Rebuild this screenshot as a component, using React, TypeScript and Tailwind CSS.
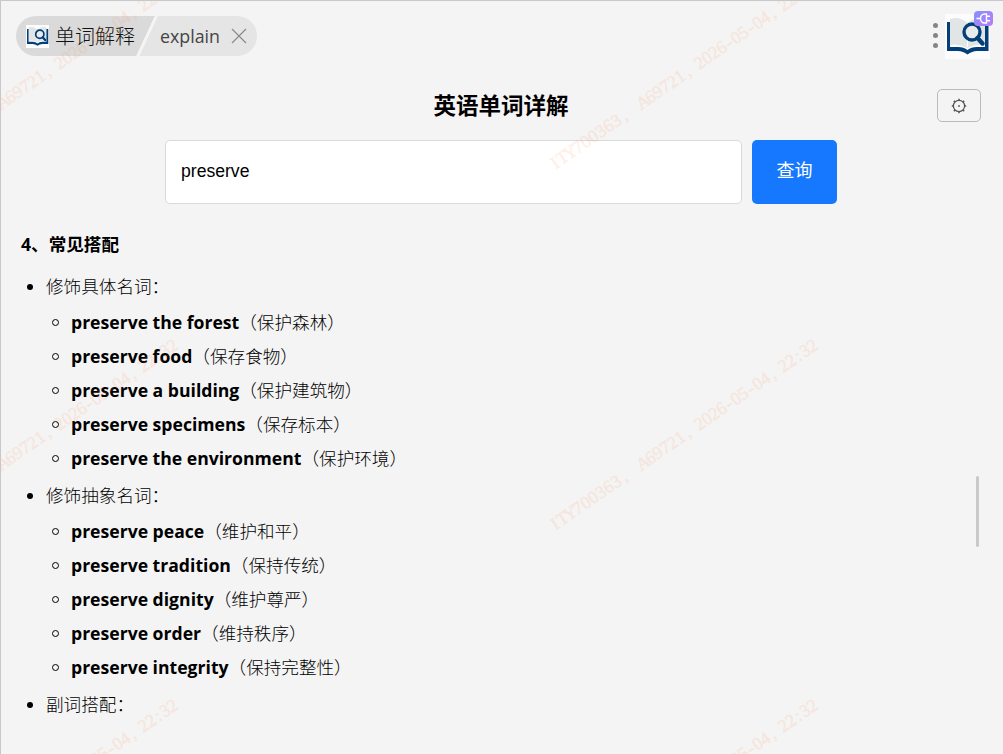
import { useState } from "react";

type TCollocation = {
  phrase: string;
  meaning: string;
};

type TGroup = {
  title: string;
  items: TCollocation[];
};

const groups: TGroup[] = [
  {
    title: "修饰具体名词：",
    items: [
      { phrase: "preserve the forest", meaning: "（保护森林）" },
      { phrase: "preserve food", meaning: "（保存食物）" },
      { phrase: "preserve a building", meaning: "（保护建筑物）" },
      { phrase: "preserve specimens", meaning: "（保存标本）" },
      { phrase: "preserve the environment", meaning: "（保护环境）" },
    ],
  },
  {
    title: "修饰抽象名词：",
    items: [
      { phrase: "preserve peace", meaning: "（维护和平）" },
      { phrase: "preserve tradition", meaning: "（保持传统）" },
      { phrase: "preserve dignity", meaning: "（维护尊严）" },
      { phrase: "preserve order", meaning: "（维持秩序）" },
      { phrase: "preserve integrity", meaning: "（保持完整性）" },
    ],
  },
  { title: "副词搭配：", items: [] },
];

export default function App() {
  return (
    <div className="relative flex h-[754px] w-[1003px] flex-col overflow-hidden border-l border-t border-[#c8c8c8] bg-[#f4f4f4] font-['Open_Sans','Noto_Sans_CJK_SC',sans-serif] text-black">
      <TopBar />
      <SearchArea />
      <Result />
      <div className="absolute left-[975px] top-[475px] h-[71px] w-[3px] rounded-full bg-[#c9c9c9]" />
      <Watermark />
    </div>
  );
}

function TopBar() {
  return (
    <header className="flex h-[60px] shrink-0 items-start justify-between pl-[15px] pr-[13px]">
      <div className="mt-[15px] flex h-10 w-[241px] items-center overflow-hidden rounded-full bg-[linear-gradient(115deg,#dadada_0_125.500px,#f4f4f4_126px_128.500px,#e5e5e5_129px)] pl-[10px]">
        <BookIcon className="h-[23px] w-[23px]" />
        <span className="ml-[6px] w-[81px] whitespace-nowrap pt-[2px] text-[20px] font-light leading-[38px] text-[#111]">
          单词解释
        </span>
        <span className="ml-6 w-[62px] whitespace-nowrap text-[17.800px] leading-10 text-[#444]">
          explain
        </span>
        <svg viewBox="0 0 16 16" className="ml-[9px] h-4 w-4">
          <path d="M1 1l14 14M15 1L1 15" stroke="#888" strokeWidth="1.1" />
        </svg>
      </div>
      <div className="flex items-start">
        <div className="mr-[7px] mt-[22px] flex flex-col gap-[5px]">
          <i className="h-[5px] w-[5px] rounded-full bg-[#858585]" />
          <i className="h-[5px] w-[5px] rounded-full bg-[#858585]" />
          <i className="h-[5px] w-[5px] rounded-full bg-[#858585]" />
        </div>
        <div className="relative mt-[13px]">
          <BookIcon className="h-[45px] w-[45px]" />
          <PluginBadge />
        </div>
      </div>
    </header>
  );
}

function BookIcon({ className }: { className: string }) {
  return (
    <svg viewBox="0 0 45 45" className={className}>
      <path d="M0 0h45v45H0z" fill="#fcfcfc" />
      <path d="M5 5Q14 2 22.500 9Q31 2 40 5V31Q31 29 22.500 34Q14 29 5 31z" fill="#e2e5e5" />
      <path d="M22.500 9v24" stroke="#fff" strokeWidth="1" />
      <path
        d="M2 8H5V33H13Q19 33 22.500 36Q26 33 32 33H40V8H43.500V37H32Q27 37 22.500 40.500Q18 37 13 37H2z"
        fill="#033f78"
      />
      <circle cx="27" cy="18" r="8" fill="#e8ebeb" stroke="#033f78" strokeWidth="3.400" />
      <path d="M32.500 24l5 5.500" stroke="#033f78" strokeWidth="4.400" strokeLinecap="round" />
    </svg>
  );
}

function PluginBadge() {
  return (
    <svg viewBox="0 0 19 15" className="absolute -top-[3px] left-[29px] h-[15px] w-[19px]">
      <defs>
        <linearGradient id="badge" x1="0" y1="0" x2="1" y2="1">
          <stop offset="0" stopColor="#8790ff" />
          <stop offset="1" stopColor="#b77df3" />
        </linearGradient>
      </defs>
      <rect width="19" height="15" rx="4" fill="url(#badge)" />
      <path
        d="M2.500 7.500h4M12.500 3h-2a4 4.500 0 0 0 0 9h2zM12.500 5.200h3.500M12.500 9.800h3.500"
        fill="none"
        stroke="#fff"
        strokeWidth="1.400"
      />
    </svg>
  );
}

function SearchArea() {
  const [word, setWord] = useState("preserve");

  return (
    <section className="shrink-0">
      <div className="grid grid-cols-[1fr_auto_1fr] items-start pr-[22px] pt-7">
        <h1 className="col-start-2 ml-5 h-[51px] text-[22.500px] font-bold leading-[34px]">
          英语单词详解
        </h1>
        <button className="flex h-[33px] w-11 items-center justify-center justify-self-end rounded-[5px] border border-[#bbb]">
          <GearIcon />
        </button>
      </div>
      <div className="flex gap-[10px] pl-[164px]">
        <input
          value={word}
          onChange={(e) => setWord(e.target.value)}
          className="h-16 w-[577px] rounded-[5px] border border-[#d9d9d9] bg-white px-[15px] pb-px font-['Liberation_Sans',sans-serif] text-[17.600px] outline-none"
        />
        <button className="h-16 w-[85px] rounded-[5px] bg-[#1677ff] pb-[3px] text-[18px] text-white">
          查询
        </button>
      </div>
    </section>
  );
}

// thin ring with eight short teeth
function GearIcon() {
  return (
    <svg viewBox="0 0 16 16" className="h-4 w-4" fill="none" stroke="#555">
      <circle cx="8" cy="8" r="5.600" strokeWidth="1.200" />
      <path
        d="M8 .8v1.600M8 13.600v1.600M.8 8h1.600M13.600 8h1.600M2.900 2.900l1.200 1.200M11.900 11.900l1.200 1.200M2.900 13.100l1.200-1.200M11.900 4.100l1.200-1.200"
        strokeWidth="1.500"
      />
      <circle cx="8" cy="8" r="0.900" fill="#555" stroke="none" />
    </svg>
  );
}

function Result() {
  return (
    <article className="pl-[20px] pt-[23px] text-[17.600px]">
      <h2 className="mb-[7px] h-[34px] font-bold leading-[34px]">4、常见搭配</h2>
      <ul>
        {groups.map((group) => (
          <li key={group.title} className="mb-[2px]">
            <div className="flex h-[37px] items-center whitespace-nowrap pb-px font-light">
              <i className="ml-[6px] mr-[13px] mt-px h-[6px] w-[6px] rounded-full bg-black" />
              {group.title}
            </div>
            <ul>
              {group.items.map((item) => (
                <li
                  key={item.phrase}
                  className="flex h-[34px] items-center whitespace-nowrap font-light"
                >
                  <i className="ml-[31px] mr-[12px] h-[7px] w-[7px] rounded-full border border-black" />
                  <strong className="font-bold">{item.phrase}</strong>
                  {item.meaning}
                </li>
              ))}
            </ul>
          </li>
        ))}
      </ul>
    </article>
  );
}

const watermarkParts = [
  { text: "ITY700363,", x: 4, step: 9.3 },
  { text: "A69721,", x: 111, step: 9 },
  { text: "2026-05-04,", x: 180, step: 8.8 },
  { text: "22:32", x: 282, step: 8.8 },
];

// bottom left corner of each repeated stamp
const stamps = [
  [-86, 169],
  [554, 169],
  [-86, 530],
  [554, 530],
  [-86, 890],
  [554, 890],
];

function Watermark() {
  return (
    <svg
      viewBox="0 0 1002 753"
      className="pointer-events-none absolute inset-0 h-[753px] w-[1002px] font-['Liberation_Serif',serif] text-[18px]"
      fill="#ff8a4a"
      stroke="#ff8a4a"
      strokeWidth="0.5"
      opacity="0.13"
      textAnchor="middle"
    >
      {stamps.map(([x, y]) => (
        <g key={`${x}-${y}`} transform={`translate(${x} ${y}) rotate(-34.700)`}>
          {watermarkParts.map((part) => (
            <text
              key={part.x}
              x={part.text
                .split("")
                .map((_, i) => part.x + i * part.step)
                .join(" ")}
            >
              {part.text}
            </text>
          ))}
        </g>
      ))}
    </svg>
  );
}
